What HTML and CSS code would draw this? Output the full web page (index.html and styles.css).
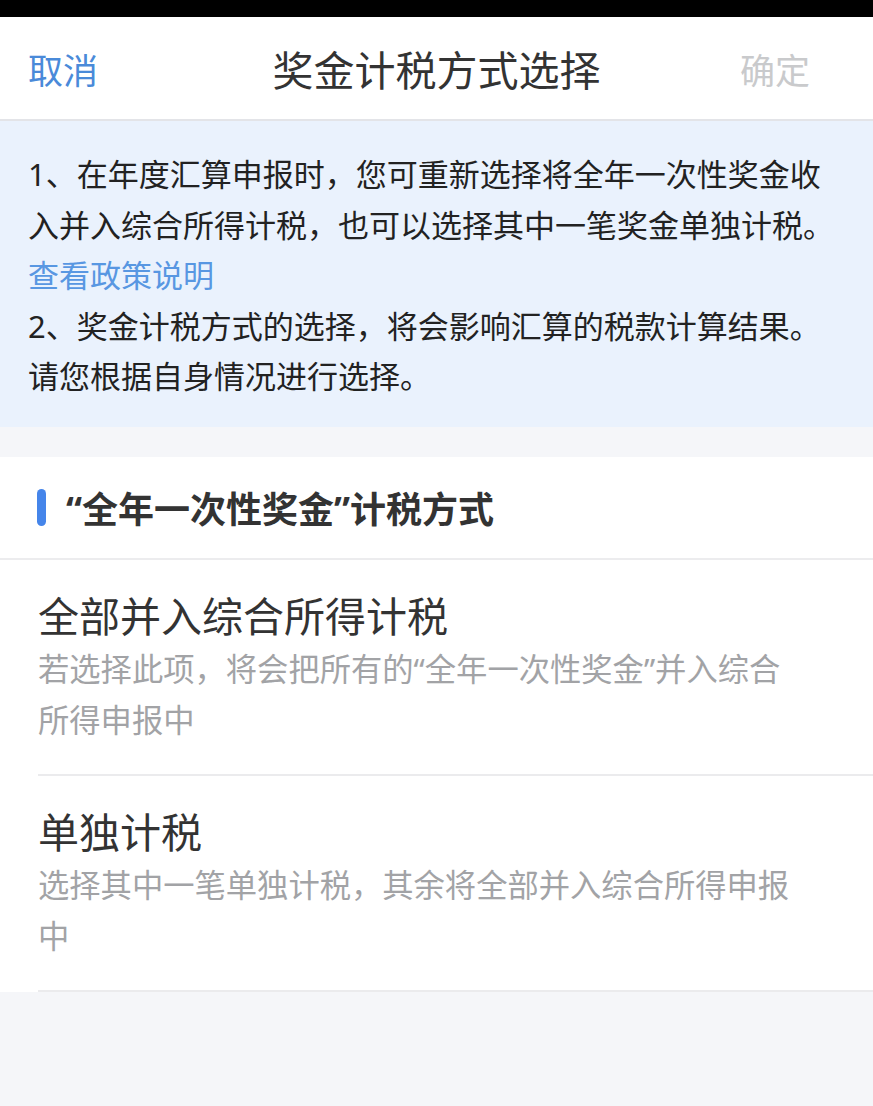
FILE: index.html
```html
<!DOCTYPE html>
<html lang="zh-CN">
<head>
<meta charset="utf-8">
<title>奖金计税方式选择</title>
<link rel="stylesheet" href="styles.css">
</head>
<body>
<div class="status-bar"></div>
<header class="nav">
  <span class="nav-cancel">取消</span>
  <h1 class="nav-title">奖金计税方式选择</h1>
  <span class="nav-done">确定</span>
</header>

<section class="notice">
  <p>1、在年度汇算申报时，您可重新选择将全年一次性奖金收入并入综合所得计税，也可以选择其中一笔奖金单独计税。</p>
  <a class="notice-link">查看政策说明</a>
  <p>2、奖金计税方式的选择，将会影响汇算的税款计算结果。</p>
  <p>请您根据自身情况进行选择。</p>
</section>

<section class="options">
  <div class="options-head">
    <span class="options-bar"></span>
    <h2 class="options-title">“全年一次性奖金”计税方式</h2>
  </div>
  <div class="option">
    <div class="option-name">全部并入综合所得计税</div>
    <div class="option-desc">若选择此项，将会把所有的“全年一次性奖金”并入综合所得申报中</div>
  </div>
  <div class="option">
    <div class="option-name">单独计税</div>
    <div class="option-desc">选择其中一笔单独计税，其余将全部并入综合所得申报中</div>
  </div>
</section>
</body>
</html>
```

FILE: styles.css
```css
* {
  box-sizing: border-box;
}

html, body {
  margin: 0;
  padding: 0;
}

body {
  width: 873px;
  min-height: 1106px;
  background: #f5f6f9;
  font-family: "Noto Sans", "Noto Sans CJK SC", sans-serif;
  color: #222;
}

.status-bar {
  height: 17px;
  background: #000;
}

/* top navigation */
.nav {
  display: grid;
  grid-template-columns: 1fr auto 1fr;
  align-items: center;
  height: 104px;
  padding: 0 28px;
  background: #fff;
  border-bottom: 2px solid #e3e4e8;
}

.nav-cancel {
  justify-self: start;
  font-size: 35px;
  color: #4a8ad9;
}

.nav-title {
  margin: 0;
  font-size: 41px;
  font-weight: 400;
  color: #333;
}

.nav-done {
  justify-self: end;
  margin-right: 35px;
  font-size: 35px;
  color: #c9cacc;
}

/* blue notice panel */
.notice {
  background: #eaf2fd;
  padding: 28px 30px 25px 28px;
  font-size: 31px;
  line-height: 50.5px;
  color: #222;
}

.notice p {
  margin: 0;
}

.notice-link {
  display: block;
  color: #5897e2;
}

/* option list */
.options {
  margin-top: 30px;
  background: #fff;
}

.options-head {
  display: flex;
  align-items: center;
  gap: 20px;
  height: 103px;
  padding-left: 37px;
  border-bottom: 2px solid #ececee;
}

.options-bar {
  width: 9px;
  height: 37px;
  border-radius: 5px;
  background: #4585ea;
}

.options-title {
  margin: 0;
  font-size: 36px;
  font-weight: 700;
  color: #333;
}

.option {
  margin-left: 38px;
  padding: 28px 80px 28px 0;
  border-bottom: 2px solid #ebebed;
}

.option-name {
  font-size: 41px;
  line-height: 56px;
  color: #333;
}

.option-desc {
  font-size: 31.3px;
  line-height: 51px;
  color: #a2a3a6;
}
```
